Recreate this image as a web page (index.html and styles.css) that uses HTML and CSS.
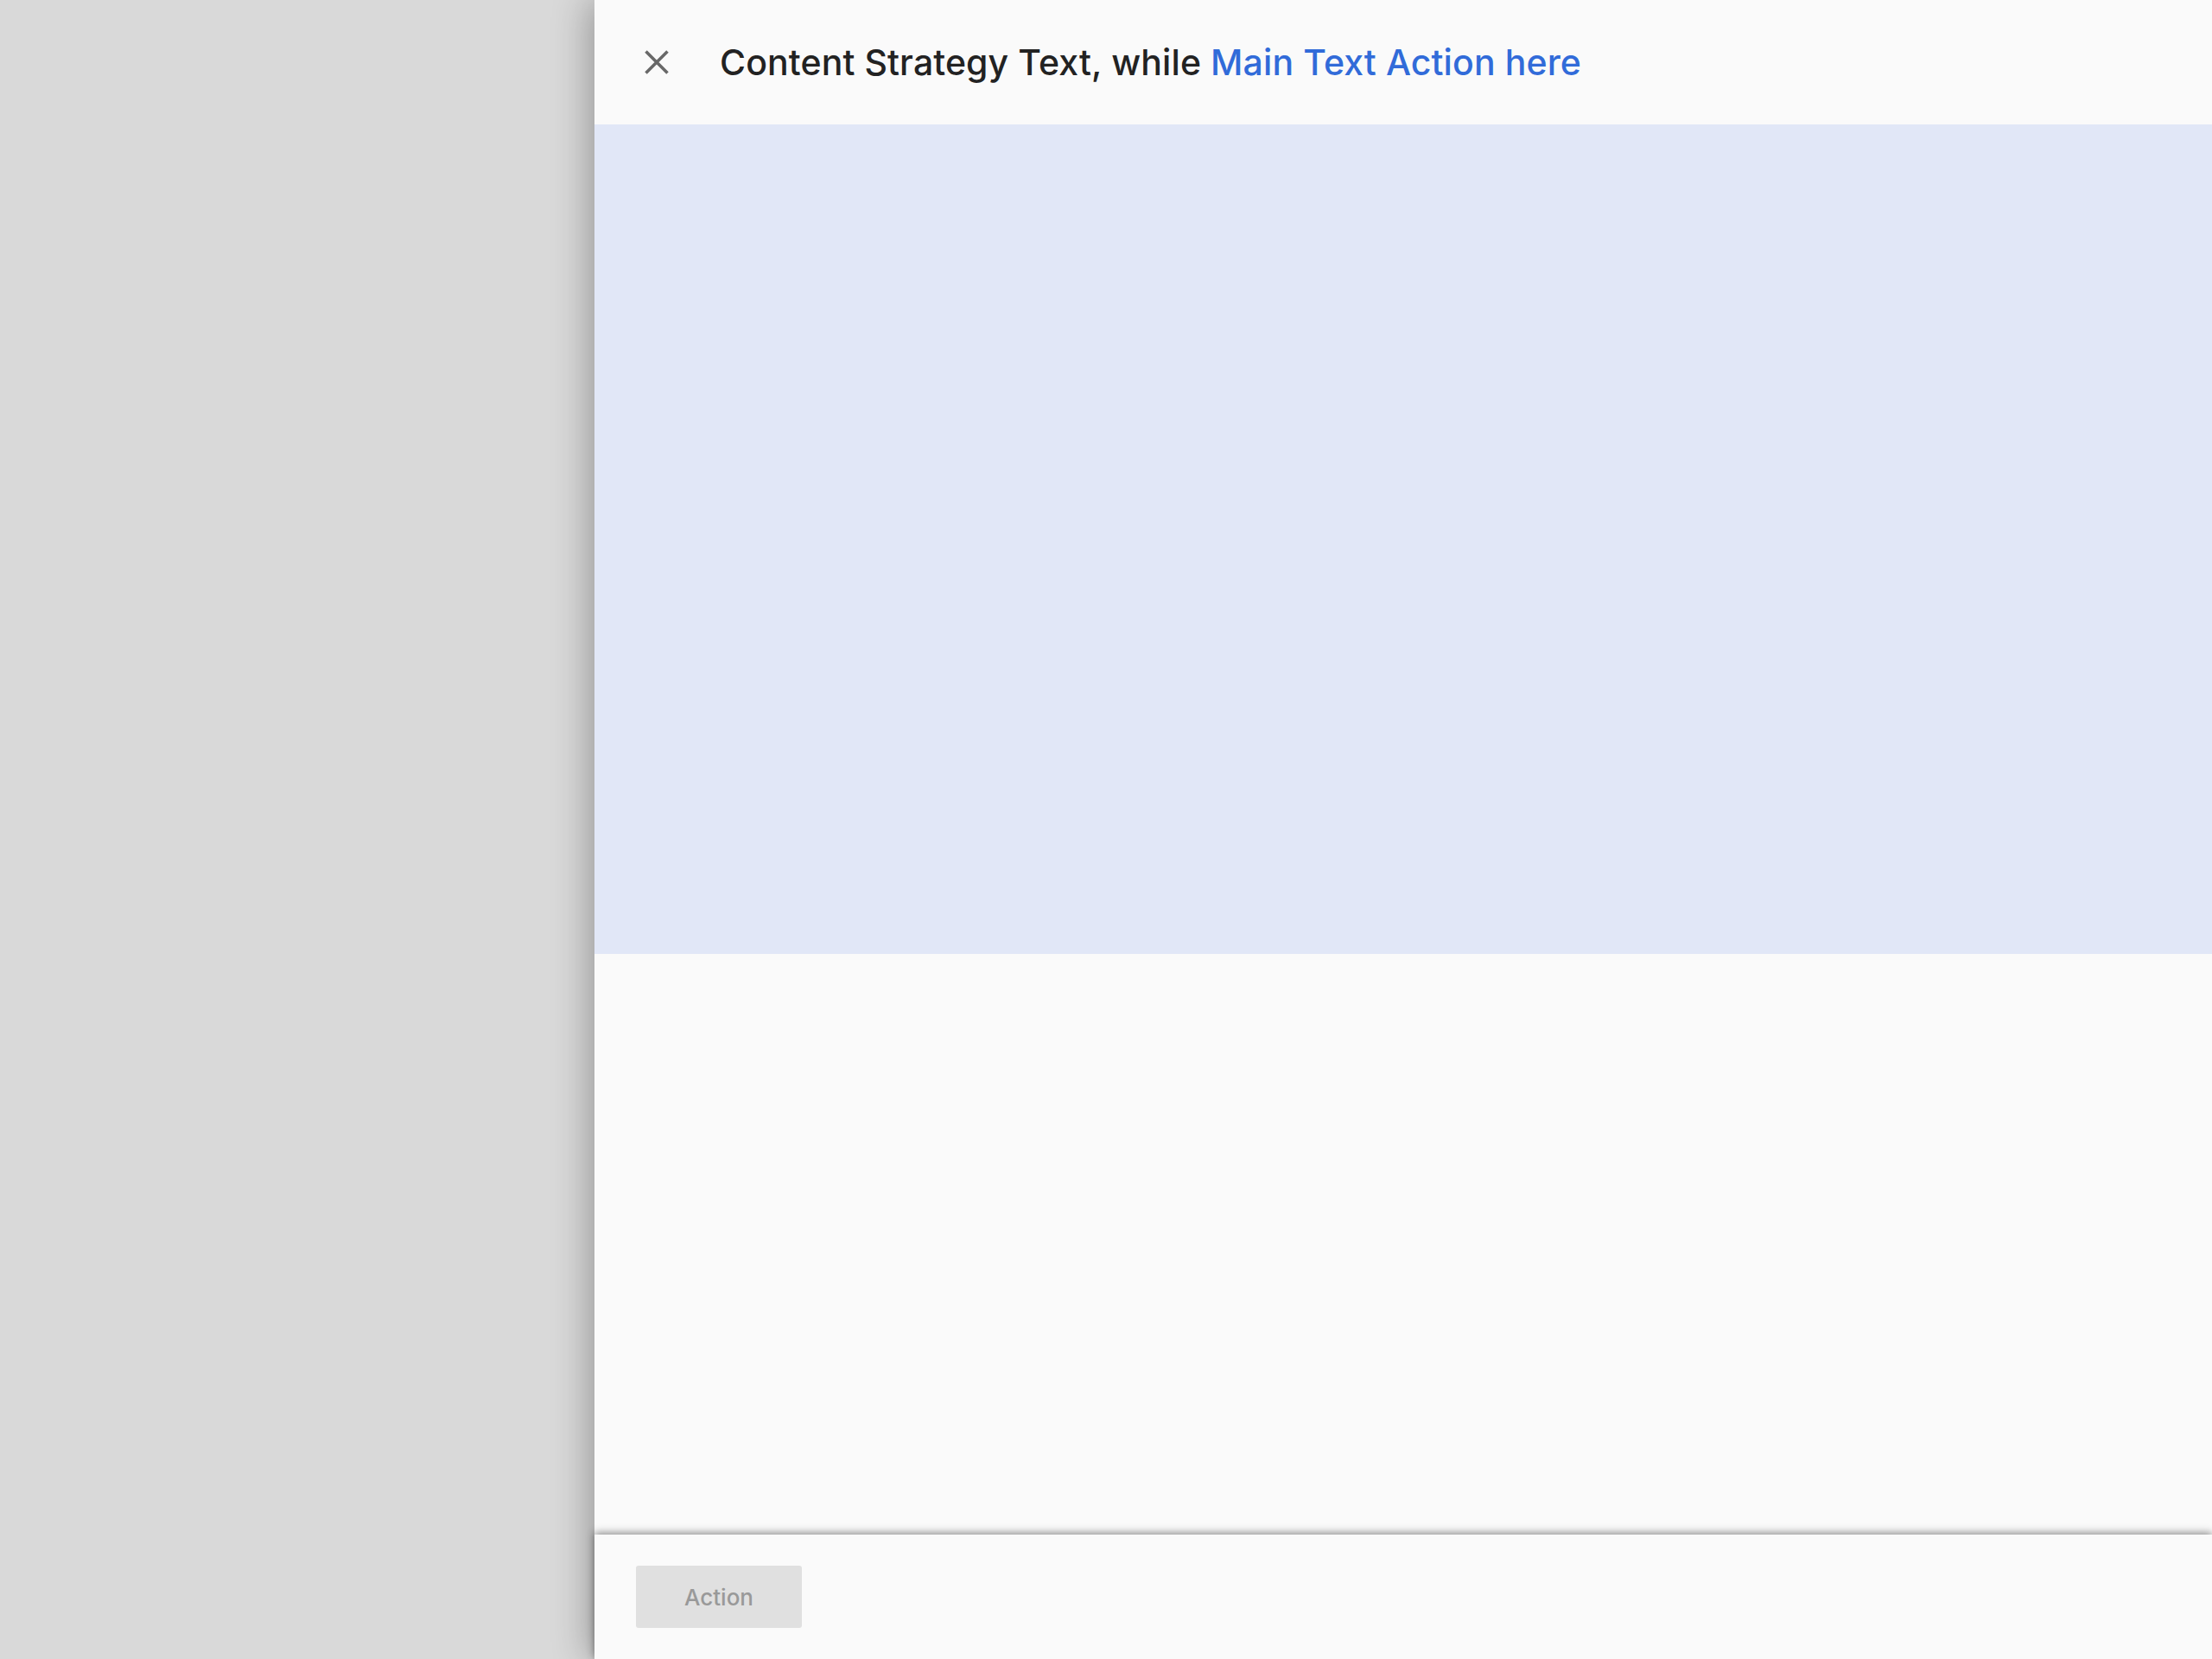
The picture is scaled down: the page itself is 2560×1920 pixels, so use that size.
FILE: index.html
```html
<!DOCTYPE html>
<html lang="en">
<head>
    <meta charset="UTF-8">
    <meta name="viewport" content="width=device-width, initial-scale=1.0">
    <title>Drawer</title>
    <link rel="stylesheet" href="styles.css">
</head>
<body>
    <div class="page">
        <div class="overlay"></div>

        <div class="drawer">
            <div class="drawer-header">
                <button class="close-btn" aria-label="Close">
                    <svg width="28" height="28" viewBox="0 0 28 28">
                        <path d="M1.5 1.5 L26.5 26.5 M26.5 1.5 L1.5 26.5" stroke="#686868" stroke-width="3.6" fill="none"/>
                    </svg>
                </button>
                <h1 class="drawer-title">Content Strategy Text, while <a href="#" class="title-link">Main Text Action here</a></h1>
            </div>

            <div class="drawer-media"></div>

            <div class="drawer-body"></div>

            <div class="drawer-footer">
                <button class="action-btn" disabled>Action</button>
            </div>
        </div>
    </div>
</body>
</html>
```

FILE: styles.css
```css
/* Reset básico */
* {
    margin: 0;
    padding: 0;
    box-sizing: border-box;
}

html, body {
    height: 100%;
}

body {
    font-family: Inter, "Liberation Sans", Arial, sans-serif;
    background-color: #d9d9d9;
    color: #222;
}

.page {
    display: flex;
    height: 100vh;
}

.overlay {
    width: 688px;
    flex-shrink: 0;
    background-color: #d9d9d9;
}

.drawer {
    flex: 1;
    display: flex;
    flex-direction: column;
    background-color: #fafafa;
    box-shadow: -6px 0 40px rgba(0, 0, 0, 0.3);
    position: relative;
    z-index: 1;
}

.drawer-header {
    height: 144px;
    display: flex;
    align-items: center;
    padding-left: 48px;
}

.close-btn {
    width: 48px;
    height: 48px;
    border: none;
    background: none;
    display: flex;
    align-items: center;
    justify-content: center;
    cursor: pointer;
}

.drawer-title {
    margin-left: 49px;
    font-size: 41px;
    font-weight: 500;
    color: #222;
    letter-spacing: 0.1px;
    white-space: nowrap;
}

.title-link {
    color: #316bd9;
    text-decoration: none;
}

.drawer-media {
    height: 960px;
    background-color: #e1e7f7;
}

.drawer-body {
    flex: 1;
}

.drawer-footer {
    height: 144px;
    padding: 36px 48px;
    background-color: #fafafa;
    box-shadow: 0 -2px 9px rgba(0, 0, 0, 0.45);
}

.action-btn {
    width: 192px;
    height: 72px;
    border: none;
    border-radius: 3px;
    background-color: #e0e0e0;
    color: #999;
    font-family: Inter, "Liberation Sans", Arial, sans-serif;
    font-size: 26px;
    font-weight: 500;
}
```
